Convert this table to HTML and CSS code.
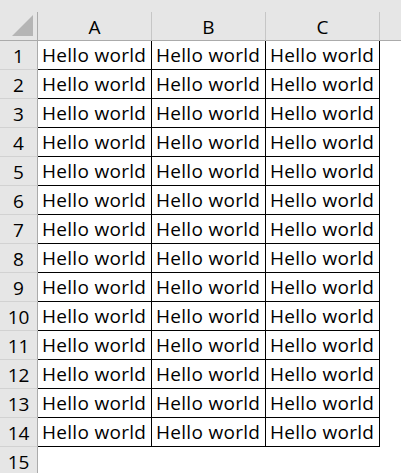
FILE: index.html
```html
<!DOCTYPE html>
<html lang="en">
<head>
    <meta charset="UTF-8">
    <title>Sheet</title>
    <link rel="stylesheet" href="styles.css">
</head>
<body>

<div class="sheet">
    <div class="corner">
        <svg width="22" height="22" viewBox="0 0 22 22"><polygon points="0,21 21,21 21,0" fill="#b5b5b5"/></svg>
    </div>
    <div class="col-head">A</div>
    <div class="col-head">B</div>
    <div class="col-head">C</div>
    <div class="col-head rest"></div>
</div>

<script>
    // 14 filled rows, then one empty row
    const sheet = document.querySelector('.sheet');
    for (let r = 1; r <= 15; r++) {
        const head = document.createElement('div');
        head.className = 'row-head';
        head.textContent = r;
        sheet.appendChild(head);
        for (let c = 0; c < 3; c++) {
            const cell = document.createElement('div');
            cell.className = r <= 14 ? 'cell' : 'cell empty';
            if (r <= 14) cell.textContent = 'Hello world';
            sheet.appendChild(cell);
        }
        const rest = document.createElement('div');
        rest.className = 'cell empty';
        sheet.appendChild(rest);
    }
</script>

</body>
</html>
```

FILE: styles.css
```css
body {
    margin: 0;
    background-color: #e6e6e6;
    font-family: "Open Sans", "Noto Sans", sans-serif;
    color: #000000;
    overflow: hidden;
}
.sheet {
    margin-top: 12px;
    display: grid;
    grid-template-columns: 38px 114px 114px 114px 1fr;
    grid-auto-rows: 29px;
}
.corner {
    border-right: 1px solid #ababab;
    border-bottom: 1px solid #ababab;
    display: flex;
    align-items: flex-start;
    justify-content: flex-end;
    padding: 3px 3px 0 0;
}
.col-head {
    border-right: 1px solid #c6c6c6;
    border-bottom: 1px solid #ababab;
    font-size: 19px;
    display: flex;
    align-items: center;
    justify-content: center;
    padding-top: 2px;
}
.col-head.rest {
    border-right: none;
}
.row-head {
    border-right: 1px solid #ababab;
    border-bottom: 1px solid #d2d2d2;
    font-size: 19px;
    display: flex;
    align-items: center;
    justify-content: center;
    padding-top: 1px;
}
.cell {
    background-color: #ffffff;
    border-right: 1px solid #000000;
    border-bottom: 1px solid #000000;
    font-size: 19px;
    letter-spacing: 0.3px;
    padding-left: 4px;
    display: flex;
    align-items: center;
    white-space: nowrap;
    overflow: hidden;
}
.cell.empty {
    border: none;
}
```
